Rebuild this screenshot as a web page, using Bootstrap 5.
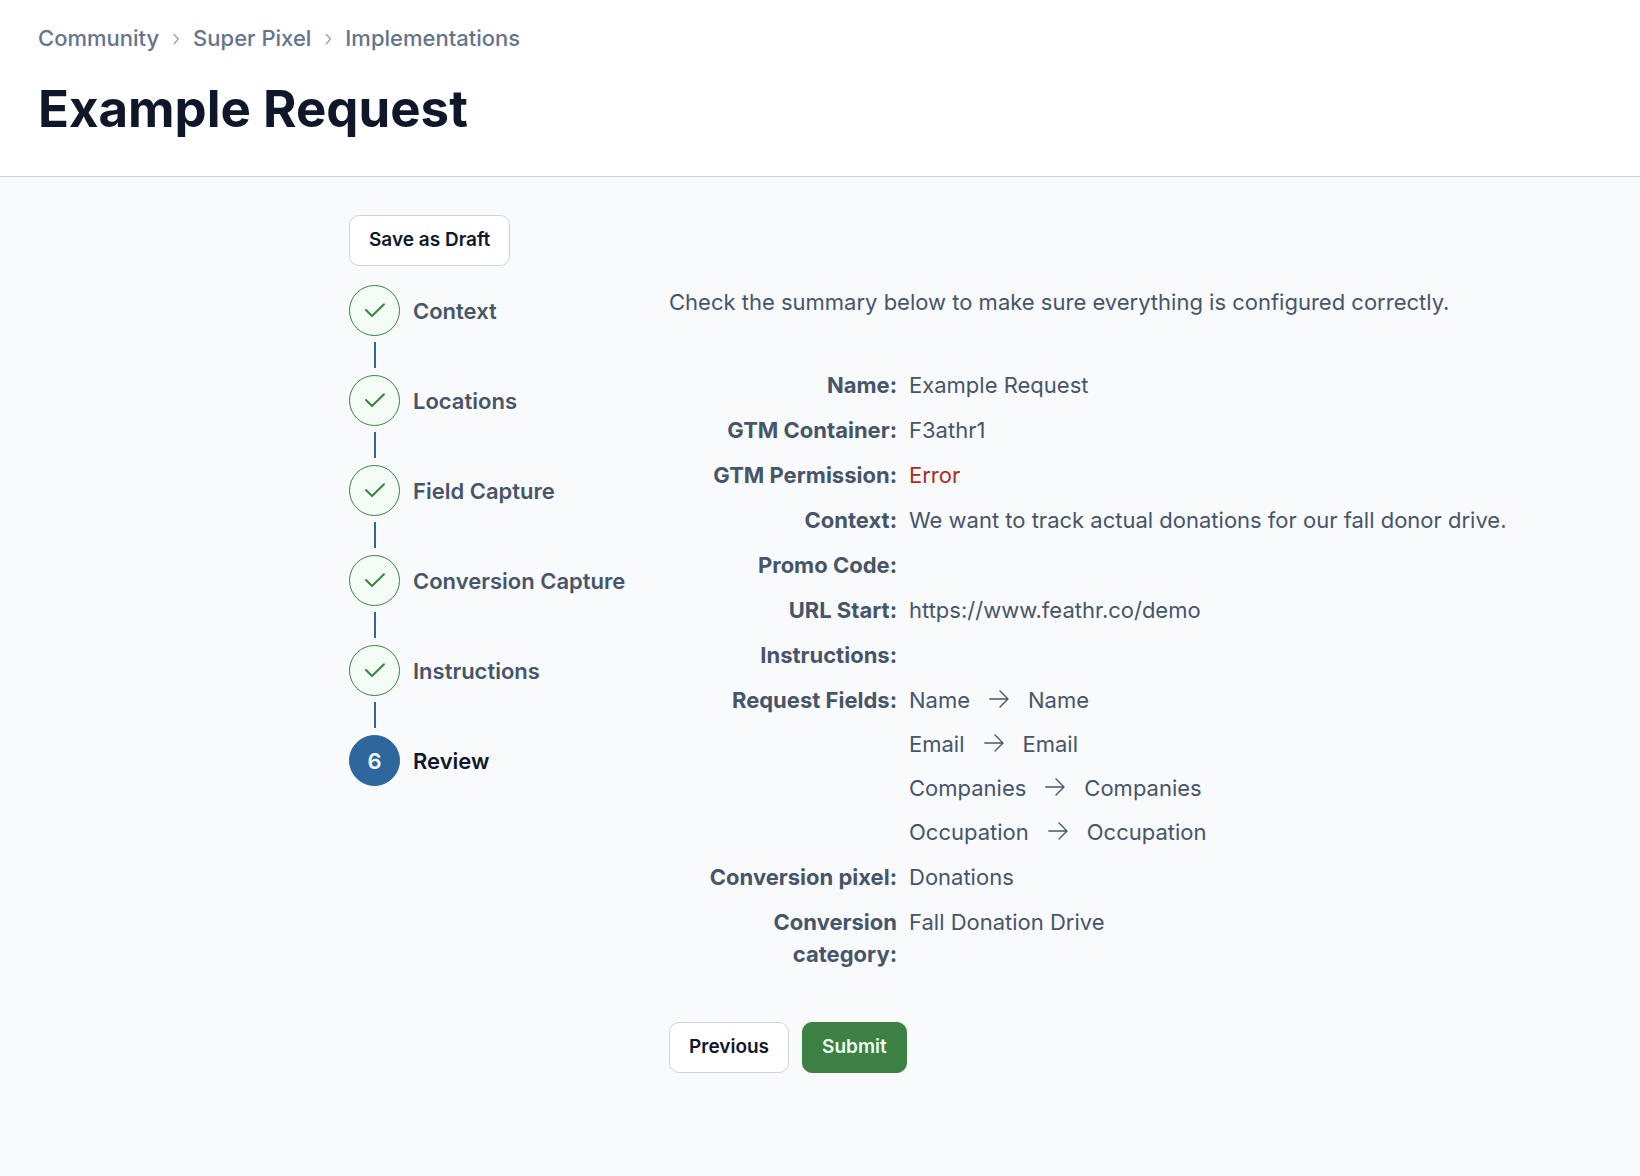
<!DOCTYPE html>
<html lang="en">
<head>
<meta charset="utf-8">
<meta name="viewport" content="width=device-width, initial-scale=1">
<title>Example Request</title>
<link href="https://cdn.jsdelivr.net/npm/bootstrap@5.3.0/dist/css/bootstrap.min.css" rel="stylesheet">
<style>
  body { font-family: Inter, "Noto Sans", sans-serif; font-size: 22px; line-height: 32px; font-weight: 400; color: #475569; background: #f9fafc; }
  .page-head { padding: 22px 38px 35px; border-bottom: 1px solid #cbd5e1; }
  .crumbs { --bs-breadcrumb-divider: "›"; --bs-breadcrumb-item-padding-x: 13px; --bs-breadcrumb-divider-color: #94a3b8; --bs-breadcrumb-font-size: 22px; font-weight: 500; margin-bottom: 23px; }
  .crumbs .breadcrumb-item::before { font-weight: 300; }
  .crumbs a { color: #64748b; text-decoration: none; }
  .page-title { font-size: 51px; line-height: 64px; font-weight: 700; color: #0f172a; }
  .wizard { max-width: 1291px; padding: 38px 38px 64px 0; }
  .wizard-side { width: 320px; }
  .action { --bs-btn-padding-x: 19px; --bs-btn-padding-y: 8px; --bs-btn-font-size: 19px; --bs-btn-line-height: 32px; --bs-btn-font-weight: 600; --bs-btn-border-radius: 10px; padding-bottom: 9px; }
  .action-plain { --bs-btn-color: #0f172a; --bs-btn-bg: #fff; --bs-btn-border-color: #cbd5e1; --bs-btn-hover-color: #0f172a; --bs-btn-hover-bg: #f1f5f9; --bs-btn-hover-border-color: #cbd5e1; }
  .action-go { --bs-btn-color: #f0fdf4; --bs-btn-bg: #3d8043; --bs-btn-border-color: #3d8043; --bs-btn-hover-color: #fff; --bs-btn-hover-bg: #326a38; --bs-btn-hover-border-color: #326a38; }
  .steps { margin-top: 19px; }
  .step { gap: 13px; font-weight: 600; color: #475569; }
  .step-dot { width: 51px; height: 51px; border: 1px solid #3d8043; background: #f3fdf6; color: #3d8043; }
  .steps li + li::before { content: ""; display: block; width: 2px; height: 26px; margin: 6px 0 7px 25px; background: #2d679b; }
  .step.current { color: #0f172a; }
  .step.current .step-dot { background: #2d679b; border-color: #2d679b; color: #f0f9ff; }
  .wizard-body { padding-top: 71px; }
  .intro { margin-bottom: 51px; }
  .summary { display: grid; grid-template-columns: 228px 1fr; gap: 13px 12px; margin-bottom: 52px; }
  .summary dt { font-weight: 700; text-align: right; }
  .summary dd { margin: 0; }
  .fault { color: #b02a24; }
  .field-map { gap: 12px; }
  .field-map li { gap: 19px; }
  .field-map svg { margin-bottom: 2px; }
  .actions { gap: 13px; }
</style>
</head>
<body>
<svg class="d-none" xmlns="http://www.w3.org/2000/svg">
  <symbol id="tick" viewBox="0 0 22 22"><path d="M2 10 8 16 20 4.2" fill="none" stroke="currentColor" stroke-width="2" stroke-linecap="round" stroke-linejoin="round"/></symbol>
  <symbol id="arrow" viewBox="0 0 20 20"><path d="M.8 10H19M11 2l8 8-8 8" fill="none" stroke="currentColor" stroke-width="1.3" stroke-linecap="round" stroke-linejoin="round"/></symbol>
</svg>

<header class="page-head bg-white">
  <nav aria-label="Breadcrumb">
    <ol class="breadcrumb crumbs">
      <li class="breadcrumb-item"><a href="#">Community</a></li>
      <li class="breadcrumb-item"><a href="#">Super Pixel</a></li>
      <li class="breadcrumb-item"><a href="#">Implementations</a></li>
    </ol>
  </nav>
  <h1 class="page-title mb-0">Example Request</h1>
</header>

<main class="wizard d-flex ms-auto">
  <div class="wizard-side flex-shrink-0">
    <button type="button" class="btn action action-plain">Save as Draft</button>
    <ol class="steps list-unstyled mb-0">
      <li><div class="step d-flex align-items-center"><span class="step-dot rounded-circle d-flex align-items-center justify-content-center"><svg width="22" height="22" aria-hidden="true"><use href="#tick"/></svg></span><span>Context</span></div></li>
      <li><div class="step d-flex align-items-center"><span class="step-dot rounded-circle d-flex align-items-center justify-content-center"><svg width="22" height="22" aria-hidden="true"><use href="#tick"/></svg></span><span>Locations</span></div></li>
      <li><div class="step d-flex align-items-center"><span class="step-dot rounded-circle d-flex align-items-center justify-content-center"><svg width="22" height="22" aria-hidden="true"><use href="#tick"/></svg></span><span>Field Capture</span></div></li>
      <li><div class="step d-flex align-items-center"><span class="step-dot rounded-circle d-flex align-items-center justify-content-center"><svg width="22" height="22" aria-hidden="true"><use href="#tick"/></svg></span><span>Conversion Capture</span></div></li>
      <li><div class="step d-flex align-items-center"><span class="step-dot rounded-circle d-flex align-items-center justify-content-center"><svg width="22" height="22" aria-hidden="true"><use href="#tick"/></svg></span><span>Instructions</span></div></li>
      <li aria-current="step"><div class="step current d-flex align-items-center"><span class="step-dot rounded-circle d-flex align-items-center justify-content-center">6</span><span>Review</span></div></li>
    </ol>
  </div>

  <section class="wizard-body flex-grow-1">
    <p class="intro">Check the summary below to make sure everything is configured correctly.</p>
    <dl class="summary">
      <dt>Name:</dt><dd>Example Request</dd>
      <dt>GTM Container:</dt><dd>F3athr1</dd>
      <dt>GTM Permission:</dt><dd class="fault">Error</dd>
      <dt>Context:</dt><dd>We want to track actual donations for our fall donor drive.</dd>
      <dt>Promo Code:</dt><dd></dd>
      <dt>URL Start:</dt><dd>https://www.feathr.co/demo</dd>
      <dt>Instructions:</dt><dd></dd>
      <dt>Request Fields:</dt>
      <dd>
        <ul class="field-map list-unstyled d-flex flex-column mb-0">
          <li class="d-flex align-items-center"><span>Name</span><svg width="20" height="20" role="img" aria-label="maps to"><use href="#arrow"/></svg><span>Name</span></li>
          <li class="d-flex align-items-center"><span>Email</span><svg width="20" height="20" role="img" aria-label="maps to"><use href="#arrow"/></svg><span>Email</span></li>
          <li class="d-flex align-items-center"><span>Companies</span><svg width="20" height="20" role="img" aria-label="maps to"><use href="#arrow"/></svg><span>Companies</span></li>
          <li class="d-flex align-items-center"><span>Occupation</span><svg width="20" height="20" role="img" aria-label="maps to"><use href="#arrow"/></svg><span>Occupation</span></li>
        </ul>
      </dd>
      <dt>Conversion pixel:</dt><dd>Donations</dd>
      <dt>Conversion category:</dt><dd>Fall Donation Drive</dd>
    </dl>
    <div class="actions d-flex">
      <button type="button" class="btn action action-plain">Previous</button>
      <button type="submit" class="btn action action-go">Submit</button>
    </div>
  </section>
</main>
<script src="https://cdn.jsdelivr.net/npm/bootstrap@5.3.0/dist/js/bootstrap.bundle.min.js"></script>
</body>
</html>
